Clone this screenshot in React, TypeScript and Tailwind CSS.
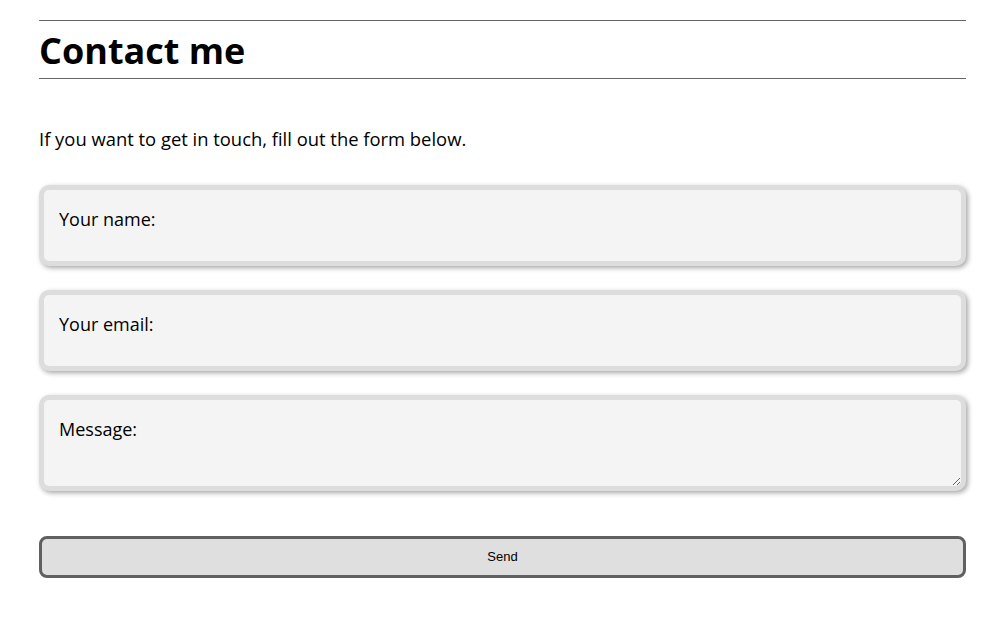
import React from 'react';

export default function App() {
  const fieldClass =
    'w-full rounded-[10px] border-[5px] border-[#dddddd] bg-[#f4f4f4] px-[15px] text-[18px] leading-[27px] text-black placeholder:text-black shadow-[2px_2px_5px_rgba(0,0,0,0.35)] outline-none';

  return (
    <div className="min-h-screen bg-white font-['Open_Sans',sans-serif] text-black">
      <div className="ml-[39px] w-[927px] pt-[20px]">
        <h1 className="border-y border-[#666666] pt-[3px] text-[36px] font-bold leading-[54px]">Contact me</h1>

        <p className="mt-[48px] text-[18.4px] leading-[24px]">If you want to get in touch, fill out the form below.</p>

        <form className="mt-[34px] flex flex-col" onSubmit={(e) => e.preventDefault()}>
          <input type="text" placeholder="Your name:" className={`${fieldClass} h-[81px] pt-[15px] pb-[29px]`} />
          <input type="email" placeholder="Your email:" className={`${fieldClass} mt-[24px] h-[81px] pt-[15px] pb-[29px]`} />
          <textarea placeholder="Message:" className={`${fieldClass} mt-[24px] block h-[96px] pt-[16px] pb-[10px]`} />
          <button
            type="submit"
            className="mt-[45px] h-[42px] w-full rounded-[8px] border-[3px] border-[#606060] bg-[#dfdfdf] font-['Liberation_Sans',sans-serif] text-[13px] text-black"
          >
            Send
          </button>
        </form>
      </div>
    </div>
  );
}
